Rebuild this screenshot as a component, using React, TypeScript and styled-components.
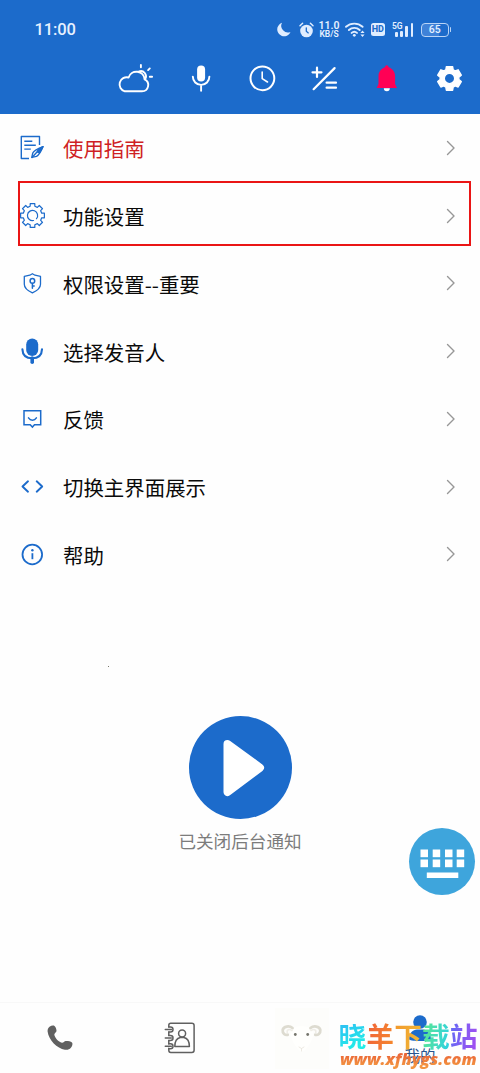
import React from "react";
import styled, { createGlobalStyle } from "styled-components";

const BLUE = "#1c6bcb";

const GlobalStyle = createGlobalStyle`
  *, *::before, *::after { box-sizing: border-box; }
  html, body { margin: 0; padding: 0; background: #fefefe; }
  body { font-family: "Noto Sans CJK SC", "Noto Sans", sans-serif; }
  svg { display: block; overflow: visible; flex: none; }
`;

const Screen = styled.div`
  position: relative;
  display: flex;
  flex-direction: column;
  width: 480px;
  height: 1073px;
  overflow: hidden;
  background: #fefefe;
`;

const Header = styled.header`
  display: flex;
  flex-direction: column;
  height: 114px;
  background: ${BLUE};
`;

const StatusBar = styled.div`
  display: flex;
  align-items: center;
  height: 59px;
  padding: 0 31px 0 34.5px;
  color: #e6f1ff;
  font-family: Roboto, sans-serif;
`;

const Time = styled.div`
  flex: 1;
  font-size: 16.5px;
  font-weight: 500;
  letter-spacing: -0.1px;
`;

const StatusIcons = styled.div`
  display: flex;
  align-items: center;
`;

const StatusItem = styled.div<{ $gap: number }>`
  display: flex;
  margin-left: ${(p) => p.$gap}px;
`;

const Speed = styled.div`
  display: flex;
  flex-direction: column;
  align-items: center;
  width: 20px;
  white-space: nowrap;
  font-weight: 600;
  font-size: 10.5px;
  line-height: 9px;
`;

const SpeedUnit = styled.div`
  font-size: 8.5px;
  line-height: 8px;
  font-weight: 600;
`;

const HdBadge = styled.div`
  width: 14.5px;
  height: 13px;
  border-radius: 2.5px;
  background: #e0edff;
  color: ${BLUE};
  font-size: 9px;
  line-height: 13.5px;
  font-weight: 800;
  text-align: center;
`;

const Signal = styled.div`
  display: flex;
  align-items: flex-end;
  gap: 2.6px;
  position: relative;
  width: 21px;
  height: 15px;
  padding-left: 2px;
`;

const SignalBar = styled.div<{ $h: number }>`
  width: 2.6px;
  height: ${(p) => p.$h}px;
  border-radius: 1px;
  background: #e0edff;
`;

const Generation = styled.span`
  position: absolute;
  left: -1px;
  top: 0;
  font-size: 8.5px;
  line-height: 8px;
  font-weight: 600;
`;

const Battery = styled.div`
  position: relative;
  width: 28.5px;
  height: 14px;
  border: 1.2px solid #b9d4f6;
  border-radius: 4px;
  background: linear-gradient(90deg, #3f82d8 65%, transparent 65%);
  font-size: 10.5px;
  line-height: 12.5px;
  font-weight: 500;
  text-align: center;
  &::after {
    content: "";
    position: absolute;
    right: -3px;
    top: 3.5px;
    width: 1.5px;
    height: 5px;
    border-radius: 1px;
    background: #b9d4f6;
  }
`;

const Toolbar = styled.div`
  display: grid;
  grid-template-columns: repeat(6, 62.4px);
  justify-content: end;
  justify-items: center;
  margin-right: -0.8px;
`;

const Menu = styled.nav`
  display: flex;
  flex-direction: column;
`;

const MenuRow = styled.div<{ $accent?: boolean; $boxed?: boolean }>`
  position: relative;
  display: flex;
  align-items: center;
  height: 67.75px;
  padding: 0 24px 0 19px;
  color: ${(p) => (p.$accent ? "#cf1f24" : "#0a0a0a")};
  ${(p) =>
    p.$boxed &&
    `&::after {
      content: "";
      position: absolute;
      left: 18px;
      right: 9px;
      top: -0.5px;
      height: 65px;
      border: 2.4px solid #ea1515;
    }`}
`;

const MenuIcon = styled.div`
  width: 27px;
  height: 27px;
`;

const MenuLabel = styled.div`
  flex: 1;
  margin-left: 17px;
  font-size: 20.45px;
  line-height: 30px;
  padding-top: 1px;
`;

const Main = styled.main`
  flex: 1;
  display: flex;
  flex-direction: column;
  align-items: center;
`;

const Speck = styled.div`
  align-self: flex-start;
  width: 1px;
  height: 1px;
  margin: 78px 0 0 108px;
  background: #77776a;
`;

const PlayButton = styled.div`
  width: 103px;
  height: 103px;
  margin-top: 49px;
  border-radius: 50%;
  background: ${BLUE};
`;

const Status = styled.div`
  margin-top: 9px;
  font-size: 17.6px;
  line-height: 26px;
  color: #7c7c7c;
`;

const KeyboardButton = styled.div`
  position: absolute;
  left: 409px;
  top: 828px;
  width: 66px;
  height: 67px;
  border-radius: 50%;
  background: #3ea5dc;
`;

const TabBar = styled.footer`
  display: grid;
  grid-template-columns: repeat(4, 1fr);
  height: 71px;
  border-top: 1px solid #f8f8f8;
`;

const Tab = styled.div`
  display: flex;
  flex-direction: column;
  align-items: center;
  justify-content: center;
`;

const ActiveTab = styled(Tab)`
  justify-content: flex-start;
  padding-top: 12px;
  font-size: 15.4px;
  line-height: 20px;
  color: #27548f;
`;

const TabLabel = styled.div`
  margin-top: 4px;
`;

const Watermark = styled.div`
  position: absolute;
  left: 338.5px;
  top: 1019px;
  width: 141px;
`;

const BrandName = styled.div`
  display: flex;
  font-size: 27.8px;
  line-height: 33px;
  font-weight: 700;
`;

const BrandChar = styled.span<{ $fill: string }>`
  background: ${(p) => p.$fill};
  background-clip: text;
  -webkit-background-clip: text;
  color: transparent;
`;

const BrandUrl = styled.div`
  margin: -4px 0 0 1.5px;
  font-family: "Open Sans", sans-serif;
  font-size: 16.4px;
  line-height: 22px;
  font-weight: 800;
  font-style: italic;
  letter-spacing: 0;
  white-space: nowrap;
  width: max-content;
  background: linear-gradient(180deg, #ea6638 30%, #f39440 80%);
  background-clip: text;
  -webkit-background-clip: text;
  color: transparent;
`;

const stroke = (color: string, width: number) => ({
  fill: "none",
  stroke: color,
  strokeWidth: width,
  strokeLinecap: "round" as const,
  strokeLinejoin: "round" as const,
});

const gearPath = (
  teeth: number, outer: number, inner: number, c: number, top: number, base: number, turn = 0
) => {
  const pts: string[] = [];
  for (let i = 0; i < teeth; i++) {
    const mid = ((i + turn) * 2 * Math.PI) / teeth - Math.PI / 2;
    [[-base, inner], [-top, outer], [top, outer], [base, inner]].forEach(([d, r]) => {
      pts.push(`${(c + r * Math.cos(mid + d)).toFixed(2)} ${(c + r * Math.sin(mid + d)).toFixed(2)}`);
    });
  }
  return `M${pts.join("L")}Z`;
};

const WeatherIcon = () => (
  <svg width="40" height="38" viewBox="1 0 40 38" {...stroke("#fff", 1.9)}>
    <path d="M7.8 32.3H25a6.3 6.3 0 0 0 2.6-12 8.2 8.2 0 0 0-16-1.8 7 7 0 0 0-3.8 13.8Z" />
    <path d="M22 12.4a5.2 5.2 0 0 1 6.2 7.6M23.9 6v2.3M32.8 9.4l-1.7 1.7M32.8 17.7h2.3" />
  </svg>
);

const ToolMicIcon = () => (
  <svg width="40" height="38" viewBox="-1.2 0 40 38">
    <rect x="15.9" y="6.5" width="8" height="16" rx="4" fill="#fff" />
    <path d="M11.6 17.6a8.3 8.3 0 0 0 16.6 0M19.9 26v5.8" {...stroke("#fff", 1.9)} />
  </svg>
);

const ClockIcon = () => (
  <svg width="40" height="38" viewBox="-0.8 0 40 38" {...stroke("#fff", 2)}>
    <circle cx="19.6" cy="19.3" r="11.9" />
    <path d="M19.4 13v6.6l5.3 3.4" strokeWidth="1.6" />
  </svg>
);

const CalcIcon = () => (
  <svg width="40" height="38" viewBox="0 0 40 38" {...stroke("#fff", 2.2)}>
    <path d="M7.5 13.3h9M12 8.7v9.2M29.6 9.1 8.6 30.2M21.6 23.7H31M21.6 28.7H31" />
  </svg>
);

const BellIcon = () => (
  <svg width="40" height="38" viewBox="0 0 40 38">
    <path d="M16.8 29.3h6a3 3 0 0 1-6 0" fill="#fff" />
    <path d="M19.8 6.3c-1 0-1.7.8-1.8 1.9-4.1 1.4-6.5 4.8-6.5 9v7.8l-1.9 4h20.4l-1.900-4v-7.800c0-4.200-2.400-7.600-6.500-9-.1-1.100-.8-1.900-1.800-1.900Z" fill="#ff0055" />
  </svg>
);

const SettingsIcon = () => (
  <svg width="40" height="38" viewBox="0 0 40 38">
    <g transform="translate(-0.2 -0.3)">
      <path
        fillRule="evenodd"
        fill="#fff"
        stroke="#fff"
        strokeWidth="1.4"
        strokeLinejoin="round"
        d={gearPath(6, 12.2, 9.4, 19.7, 0.26, 0.4) + "M24.9 19.7a5.2 5.2 0 1 0-10.4 0 5.2 5.2 0 0 0 10.4 0Z"}
      />
    </g>
  </svg>
);

const MoonIcon = () => (
  <svg width="14" height="15" viewBox="0 0 14 15">
    <path d="M5 .8A6.9 6.9 0 1 0 13.5 10 6.700 6.700 0 0 1 5 .8Z" fill="#e0edff" />
  </svg>
);

const AlarmIcon = () => (
  <svg width="15" height="16" viewBox="0 0 15 16">
    <circle cx="7.5" cy="9" r="6.3" fill="#e0edff" />
    <path d="M1 3.7 3.6 1.3M14 3.7l-2.6-2.4" {...stroke("#e0edff", 1.5)} />
    <path d="M7.3 5.8v3.500l2 1.600" {...stroke(BLUE, 1.3)} />
  </svg>
);

const WifiIcon = () => (
  <svg width="20" height="15" viewBox="0 0 20 15">
    <path d="M1 4.800a12.300 12.300 0 0 1 16.600 0M3.900 8a8 8 0 0 1 10.800 0M6.600 10.900a4 4 0 0 1 5.400 0" {...stroke("#e0edff", 1.9)} />
    <circle cx="9.3" cy="13.3" r="1.4" fill="#e0edff" />
    <path d="m15.400 10.900 2.100-2.500 2.100 2.500zm0 1.500 2.100 2.500 2.100-2.500z" fill="#e0edff" />
  </svg>
);

const GuideIcon = () => (
  <svg width="27" height="27" viewBox="0 1 27 27" {...stroke(BLUE, 1.4)}>
    <path d="M10 25.500H2.300V3.500h18.200v8.500M5.300 8.300h8M5.300 12.200h11.500M5.300 16.100h6.500" strokeLinecap="butt" />
    <path d="M24 13.600c-5.500 2.200-9.300 4-10.200 6.300l-1 4.500 4.700-1c2.800-1.500 4.500-4.500 6.500-9.800Z" />
    <path d="m13 24.500 5-5.500M24 13.600c-2.800 1.600-5.700 3.800-5.900 5.100 1 .8 1.300.9 2.500.8Z" fill={BLUE} />
  </svg>
);

const CogIcon = () => (
  <svg width="27" height="27" viewBox="0 0 27 27" {...stroke(BLUE, 1.2)}>
    <path d={gearPath(8, 12.1, 9.5, 13.5, 0.19, 0.25)} />
    <path d="M14.500 18.500A5.100 5.100 0 1 1 17.500 16.700" />
  </svg>
);

const ShieldIcon = () => (
  <svg width="27" height="27" viewBox="0 0 27 27" {...stroke(BLUE, 1.3)}>
    <path d="M13.400 3.700 16 5.200l5.500 1.200v7.800c0 3.500-3.400 6.500-8.100 8.600-4.700-2.100-8.100-5.100-8.100-8.600V6.400l5.500-1.200Z" />
    <circle cx="13.4" cy="10.9" r="2.3" strokeWidth="1.5" />
    <path d="M13.400 13.400v4.800M13.600 16h1.600" strokeWidth="1.5" />
  </svg>
);

const VoiceIcon = () => (
  <svg width="27" height="27" viewBox="0 0 27 27">
    <rect x="7.2" y="0.5" width="12" height="17.5" rx="6" fill={BLUE} />
    <path d="M3.400 11.200c.2 6 4 9 9.800 9s9.600-3 9.800-9" {...stroke(BLUE, 2.1)} />
    <path d="M13.200 20v4.300" {...stroke(BLUE, 3.6)} />
  </svg>
);

const FeedbackIcon = () => (
  <svg width="27" height="27" viewBox="0 -0.3 27 27" {...stroke(BLUE, 1.5)}>
    <path d="M5 5.500h16.700v14h-6.200l-2.100 2.300-2.200-2.300H5Z" strokeLinejoin="miter" />
    <path d="M9.500 12.600c2 3 5.900 3 7.900 0" />
  </svg>
);

const CodeIcon = () => (
  <svg width="27" height="27" viewBox="0 0 27 27" {...stroke(BLUE, 1.9)}>
    <path d="m9 8.300-5.500 5.200L9 18.700M17.700 8.300l5.500 5.200-5.500 5.200" />
  </svg>
);

const InfoIcon = () => (
  <svg width="27" height="27" viewBox="0 0 27 27" {...stroke(BLUE, 1.8)}>
    <circle cx="13.3" cy="13.5" r="9.8" />
    <path d="M13.400 12.200v6" strokeLinecap="butt" />
    <circle cx="13.4" cy="9.3" r="1.2" fill={BLUE} stroke="none" />
  </svg>
);

const Chevron = () => (
  <svg width="12" height="16" viewBox="0 0 12 16" {...stroke("#979797", 1.4)}>
    <path d="m3.500 1.500 6.500 6.500-6.500 6.500" />
  </svg>
);

const PlayIcon = () => (
  <svg width="103" height="103" viewBox="0 0 103 103">
    <path d="M38.500 28 71 51.700 38.500 76Z" fill="#fff" stroke="#fff" strokeWidth="8" strokeLinejoin="round" />
  </svg>
);

const KeyboardIcon = () => (
  <svg width="66" height="67" viewBox="0.5 0 66 67" fill="#fff">
    {[21.5, 31.5].map((y) =>
      [12, 24.2, 36.5, 48.2].map((x) => <rect key={`${x}-${y}`} x={x} y={y} width="7.5" height="7.7" />)
    )}
    <rect x="18.3" y="44.5" width="31.5" height="5.5" />
  </svg>
);

const PhoneIcon = () => (
  <svg width="28" height="28" viewBox="-0.3 -0.2 28 28" fill="#606060">
    <path d="M3.200 2.600C5 1.300 7 .9 8.200 1.700c1.300 1.200 2 3.300 2 5.200-.2 1.500-2.200 2.200-2.200 3.600.8 3.500 4.100 6.900 7.600 8 1.500.2 2.400-1.600 3.800-1.800 2.300-.1 4.800.3 6.300 1.500 1 1.200.3 3.500-1.100 5.300-1.500 1.800-3.600 2.400-6 2C10.800 24.200 2.400 16 1.300 7.300c-.1-2 .5-3.600 1.900-4.700Z" />
  </svg>
);

const ContactsIcon = () => (
  <svg width="32" height="32" viewBox="-0.3 0 32 32" {...stroke("#606060", 1.5)}>
    <path d="M4.500 5V3.300C4.500 2 5.300 1.200 6.500 1.200h21c1.400 0 2.300.8 2.300 2.200v24.800c0 1.400-.9 2.200-2.300 2.200h-21c-1.200 0-2-.8-2-2.100v-2M4.500 10v3.500M4.500 18.500V22" />
    {[7.5, 16, 24.2].map((y) => (
      <path key={y} d={`M1 ${y}h6M4.500 ${y - 2.5}h1.700a2.500 2.500 0 0 1 0 5H4.500`} />
    ))}
    <circle cx="17.8" cy="11.6" r="3.5" />
    <path d="M10.500 24.500c0-5 2.400-8.300 5.500-9h3.600c3.100.7 5.500 4 5.500 9Z" />
  </svg>
);

const SheepIcon = () => (
  <svg width="54" height="62" viewBox="-2 -1 54 62">
    <rect width="54" height="61" fill="#fdfdfb" />
    <path d="M17 22c2-5 17-5 20 0 3 6-1 13-6 19-2 3-6 3-8 0-5-6-9-13-6-19Z" fill="#fffffd" />
    <path d="M17.500 20c-3-2.500-9-2-9.800 2-.4 3.500 2.500 5.500 5 4.800M35.500 20c3-2.500 9-2 9.800 2 .4 3.500-2.500 5.500-5 4.800" {...stroke("#dddbd0", 2.8)} />
    <path d="M17 22.500c-3-2-5.500-.5-4.800 2M36 22.500c3-2 5.500-.5 4.800 2" {...stroke("#efede6", 1.6)} />
    <circle cx="20.3" cy="26.5" r="1.4" fill="#75756c" />
    <circle cx="32.7" cy="26.5" r="1.4" fill="#75756c" />
    <path d="m24 39 2.500 1.500L29 39M26.500 40.500V43" {...stroke("#e9e4dc", 0.8)} />
  </svg>
);

const ProfileIcon = () => (
  <svg width="30" height="26" viewBox="0 -0.5 30 26" fill={BLUE}>
    <circle cx="15" cy="6.5" r="6.8" />
    <path d="M4 24c0-6.500 4-10 8-10h6c4 0 8 3.500 8 10-3 2-19 2-22 0Z" />
  </svg>
);

const tools = [WeatherIcon, ToolMicIcon, ClockIcon, CalcIcon, BellIcon, SettingsIcon];

const menu = [
  { label: "使用指南", Icon: GuideIcon, accent: true },
  { label: "功能设置", Icon: CogIcon, boxed: true },
  { label: "权限设置--重要", Icon: ShieldIcon },
  { label: "选择发音人", Icon: VoiceIcon },
  { label: "反馈", Icon: FeedbackIcon },
  { label: "切换主界面展示", Icon: CodeIcon },
  { label: "帮助", Icon: InfoIcon },
];

const brand = [
  ["晓", "linear-gradient(150deg, #2cc4f2 20%, #22eee8 80%)"],
  ["羊", "linear-gradient(100deg, #f0603a, #f58a2c)"],
  ["下", "linear-gradient(100deg, #f2952a, #f0bd3a)"],
  ["载", "linear-gradient(100deg, #5fe88a, #2cd0e8)"],
  ["站", "linear-gradient(100deg, #5f6cf5, #a84cf0)"],
];

export default function App() {
  return (
    <>
      <GlobalStyle />
      <Screen>
        <Header>
          <StatusBar>
            <Time>11:00</Time>
            <StatusIcons>
              <StatusItem $gap={0}><MoonIcon /></StatusItem>
              <StatusItem $gap={7.5}><AlarmIcon /></StatusItem>
              <StatusItem $gap={5.5}><Speed>11.0<SpeedUnit>KB/S</SpeedUnit></Speed></StatusItem>
              <StatusItem $gap={5.5}><WifiIcon /></StatusItem>
              <StatusItem $gap={6}><HdBadge>HD</HdBadge></StatusItem>
              <StatusItem $gap={8}>
                <Signal>
                  <Generation>5G</Generation>
                  {[5, 6, 11, 14].map((h, i) => <SignalBar key={i} $h={h} />)}
                </Signal>
              </StatusItem>
              <StatusItem $gap={6.5}><Battery>65</Battery></StatusItem>
            </StatusIcons>
          </StatusBar>
          <Toolbar>
            {tools.map((Icon, i) => <Icon key={i} />)}
          </Toolbar>
        </Header>
        <Menu>
          {menu.map(({ label, Icon, accent, boxed }) => (
            <MenuRow key={label} $accent={accent} $boxed={boxed}>
              <MenuIcon><Icon /></MenuIcon>
              <MenuLabel>{label}</MenuLabel>
              <Chevron />
            </MenuRow>
          ))}
        </Menu>
        <Main>
          <Speck />
          <PlayButton><PlayIcon /></PlayButton>
          <Status>已关闭后台通知</Status>
        </Main>
        <TabBar>
          <Tab><PhoneIcon /></Tab>
          <Tab><ContactsIcon /></Tab>
          <Tab><SheepIcon /></Tab>
          <ActiveTab><ProfileIcon /><TabLabel>我的</TabLabel></ActiveTab>
        </TabBar>
        <KeyboardButton><KeyboardIcon /></KeyboardButton>
        <Watermark>
          <BrandName>
            {brand.map(([char, fill]) => <BrandChar key={char} $fill={fill}>{char}</BrandChar>)}
          </BrandName>
          <BrandUrl>www.xfhygs.com</BrandUrl>
        </Watermark>
      </Screen>
    </>
  );
}
